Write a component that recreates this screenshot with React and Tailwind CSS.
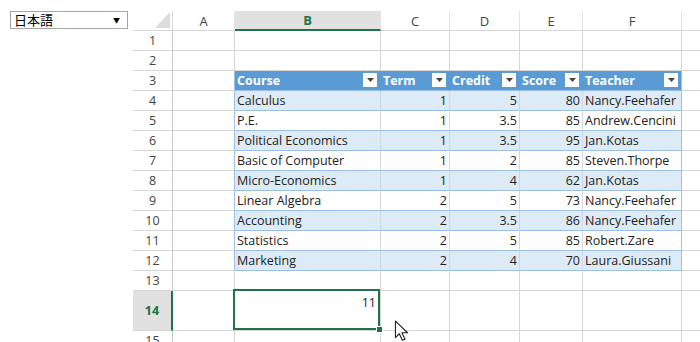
import React from 'react';

const widths = ['w-[40px]', 'w-[62px]', 'w-[146px]', 'w-[69px]', 'w-[70px]', 'w-[63px]', 'w-[99px]'];

const data = [
  ['Calculus', 1, 5, 80, 'Nancy.Feehafer'],
  ['P.E.', 1, 3.5, 85, 'Andrew.Cencini'],
  ['Political Economics', 1, 3.5, 95, 'Jan.Kotas'],
  ['Basic of Computer', 1, 2, 85, 'Steven.Thorpe'],
  ['Micro-Economics', 1, 4, 62, 'Jan.Kotas'],
  ['Linear Algebra', 2, 5, 73, 'Nancy.Feehafer'],
  ['Accounting', 2, 3.5, 86, 'Nancy.Feehafer'],
  ['Statistics', 2, 5, 85, 'Robert.Zare'],
  ['Marketing', 2, 4, 70, 'Laura.Giussani'],
];

const FilterBtn = () => (
  <span className="absolute right-[3px] top-[2px] w-[14px] h-[14px] bg-white flex items-center justify-center">
    <svg width="7" height="4" viewBox="0 0 7 4"><path d="M0 0h7L3.5 4z" fill="#444" /></svg>
  </span>
);

const RowHead = ({ n, selected }) => (
  <div
    className={
      'w-[40px] shrink-0 flex items-center justify-center pt-[2px] border-b border-[#d6d6d6] ' +
      (selected
        ? 'bg-[#e1e1e1] text-[#217346] font-bold border-r-2 border-r-[#217346]'
        : 'border-r border-r-[#c8c8c8] text-[#444]')
    }
  >
    {n}
  </div>
);

const Cell = ({ i, children, className = '' }) => (
  <div className={`${widths[i]} shrink-0 h-full border-r border-b px-[2px] pt-[2px] flex items-center whitespace-nowrap overflow-hidden ${className}`}>
    {children}
  </div>
);

const EmptyRow = ({ n }) => (
  <div className="flex h-[20px]">
    <RowHead n={n} />
    {[1, 2, 3, 4, 5, 6].map(i => (
      <Cell key={i} i={i} className="border-[#d6d6d6]" />
    ))}
    <div className="flex-1 border-b border-[#d6d6d6]" />
  </div>
);

export default function App() {
  const headers = ['Course', 'Term', 'Credit', 'Score', 'Teacher'];
  return (
    <div className="w-[700px] h-[342px] overflow-hidden bg-white flex text-[12.5px] text-[#222]" style={{ fontFamily: '"Open Sans", "Noto Sans CJK JP", sans-serif' }}>
      {/* language picker */}
      <div className="w-[133px] shrink-0 pl-[10px] pt-[11px]">
        <div className="w-[118px] h-[18px] border border-[#a5a5a5] flex items-center justify-between pl-[3px] pr-[7px] text-[13px] text-black" style={{ fontFamily: '"Noto Sans CJK JP", sans-serif' }}>
          <span>日本語</span>
          <span className="text-[7px]">▼</span>
        </div>
      </div>

      {/* sheet */}
      <div className="flex-1 pt-[11px]">
        {/* column headers */}
        <div className="flex h-[20px] text-[#444] text-[13px]">
          <div className="w-[40px] shrink-0 border-r border-b border-[#d6d6d6] flex items-end justify-end pr-[2px] pb-[2px]">
            <svg width="15" height="16" viewBox="0 0 15 16"><path d="M15 0V16H0z" fill="#dcdcdc" /></svg>
          </div>
          {['A', 'B', 'C', 'D', 'E', 'F'].map((c, idx) => (
            <div
              key={c}
              className={
                `${widths[idx + 1]} shrink-0 flex items-center justify-center pt-[2px] border-r border-r-[#e3e3e3] ` +
                (c === 'B'
                  ? 'bg-[#e1e1e1] text-[#217346] font-bold border-b-2 border-b-[#217346]'
                  : 'border-b border-b-[#d6d6d6]')
              }
            >
              {c}
            </div>
          ))}
          <div className="flex-1 border-b border-[#d6d6d6]" />
        </div>

        <EmptyRow n={1} />
        <EmptyRow n={2} />

        {/* table header row */}
        <div className="flex h-[20px]">
          <RowHead n={3} />
          <Cell i={1} className="border-r-[#9bc2e6] border-b-[#d6d6d6]" />
          {headers.map((h, k) => (
            <div
              key={h}
              className={`${widths[k + 2]} shrink-0 h-full relative bg-[#5b9bd5] text-white font-bold px-[2px] pt-[2px] flex items-center border-b border-b-[#9bc2e6] border-r ${k === 4 ? 'border-r-[#9bc2e6]' : 'border-r-[#5b9bd5]'}`}
            >
              {h}
              <FilterBtn />
            </div>
          ))}
          <div className="flex-1 border-b border-[#d6d6d6]" />
        </div>

        {data.map((r, k) => {
          const bg = k % 2 === 0 ? 'bg-[#ddebf7]' : 'bg-white';
          const inner = k % 2 === 0 ? 'border-r-[#c9d7e8]' : 'border-r-[#d6d6d6]';
          return (
            <div key={k} className="flex h-[20px]">
              <RowHead n={k + 4} />
              <Cell i={1} className="border-r-[#9bc2e6] border-b-[#d6d6d6]" />
              <Cell i={2} className={`${bg} ${inner} border-b-[#9bc2e6]`}>{r[0]}</Cell>
              <Cell i={3} className={`${bg} ${inner} border-b-[#9bc2e6] justify-end`}>{r[1]}</Cell>
              <Cell i={4} className={`${bg} ${inner} border-b-[#9bc2e6] justify-end`}>{r[2]}</Cell>
              <Cell i={5} className={`${bg} ${inner} border-b-[#9bc2e6] justify-end`}>{r[3]}</Cell>
              <Cell i={6} className={`${bg} border-r-[#9bc2e6] border-b-[#9bc2e6]`}>{r[4]}</Cell>
              <div className="flex-1 border-b border-[#d6d6d6]" />
            </div>
          );
        })}

        <EmptyRow n={13} />

        {/* row 14 with selected cell */}
        <div className="flex h-[40px]">
          <RowHead n={14} selected />
          <Cell i={1} className="border-[#d6d6d6]" />
          <div className="w-[146px] shrink-0 h-full relative z-10 border-r border-b border-[#d6d6d6] flex justify-end items-start pr-[4px] pt-[3px]">
            11
            <div className="absolute -left-[2px] -top-[2px] right-0 bottom-0 border-2 border-[#217346]" />
            <div className="absolute -right-[3px] -bottom-[3px] w-[7px] h-[7px] bg-[#217346] border border-white" />
            {/* mouse pointer */}
            <svg className="absolute left-[159px] top-[29px]" width="15" height="22" viewBox="0 0 13 20">
              <path d="M1 1v15l3.5-3.5 2.8 6 2.4-1.1-2.8-5.8H12z" fill="white" stroke="#222" strokeWidth="1" strokeLinejoin="round" />
            </svg>
          </div>
          {[3, 4, 5, 6].map(i => (
            <Cell key={i} i={i} className="border-[#d6d6d6]" />
          ))}
          <div className="flex-1 border-b border-[#d6d6d6]" />
        </div>

        <EmptyRow n={15} />
      </div>
    </div>
  );
}
